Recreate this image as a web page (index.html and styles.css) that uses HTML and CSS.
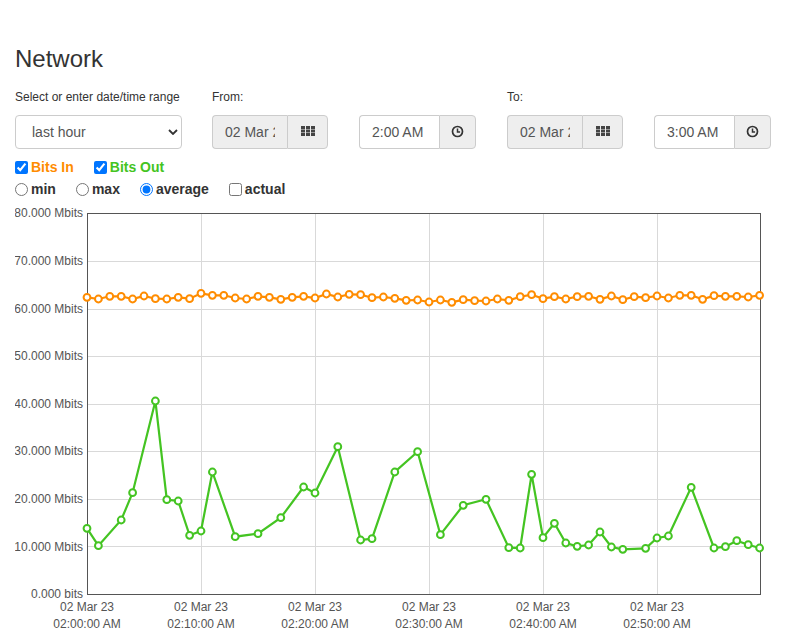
FILE: index.html
```html
<!DOCTYPE html>
<html>
<head>
<meta charset="utf-8">
<link rel="stylesheet" href="styles.css">
</head>
<body>
<div class="page">
  <h2 class="title">Network</h2>
  <div class="controls">
    <div class="col col-range">
      <label class="lbl">Select or enter date/time range</label>
      <div class="select-wrap">
        <select class="range-select"><option>last hour</option></select>
        <svg class="chev" width="10" height="6" viewBox="0 0 10 6"><path d="M1 1 L5 5 L9 1" fill="none" stroke="#333" stroke-width="1.8"/></svg>
      </div>
    </div>
    <div class="col">
      <label class="lbl">From:</label>
      <div class="pair">
        <div class="group">
          <input class="field field-date" type="text" value="02 Mar 23" readonly>
          <span class="addon addon-date">
            <svg width="14" height="10" viewBox="0 0 14 10"><g fill="#444"><rect x="0" y="0" width="4" height="3"/><rect x="5" y="0" width="4" height="3"/><rect x="10" y="0" width="4" height="3"/><rect x="0" y="3.5" width="4" height="3"/><rect x="5" y="3.5" width="4" height="3"/><rect x="10" y="3.5" width="4" height="3"/><rect x="0" y="7" width="4" height="3"/><rect x="5" y="7" width="4" height="3"/><rect x="10" y="7" width="4" height="3"/></g></svg>
          </span>
        </div>
        <div class="group">
          <input class="field field-time" type="text" value="2:00 AM">
          <span class="addon addon-time">
            <svg width="13" height="13" viewBox="-6.5 -6.5 13 13"><circle r="5" fill="none" stroke="#333" stroke-width="1.7"/><path d="M0 -3 V0.6 H2.6" fill="none" stroke="#333" stroke-width="1.5"/></svg>
          </span>
        </div>
      </div>
    </div>
    <div class="col">
      <label class="lbl">To:</label>
      <div class="pair">
        <div class="group">
          <input class="field field-date" type="text" value="02 Mar 23" readonly>
          <span class="addon addon-date">
            <svg width="14" height="10" viewBox="0 0 14 10"><g fill="#444"><rect x="0" y="0" width="4" height="3"/><rect x="5" y="0" width="4" height="3"/><rect x="10" y="0" width="4" height="3"/><rect x="0" y="3.5" width="4" height="3"/><rect x="5" y="3.5" width="4" height="3"/><rect x="10" y="3.5" width="4" height="3"/><rect x="0" y="7" width="4" height="3"/><rect x="5" y="7" width="4" height="3"/><rect x="10" y="7" width="4" height="3"/></g></svg>
          </span>
        </div>
        <div class="group">
          <input class="field field-time" type="text" value="3:00 AM">
          <span class="addon addon-time">
            <svg width="13" height="13" viewBox="-6.5 -6.5 13 13"><circle r="5" fill="none" stroke="#333" stroke-width="1.7"/><path d="M0 -3 V0.6 H2.6" fill="none" stroke="#333" stroke-width="1.5"/></svg>
          </span>
        </div>
      </div>
    </div>
  </div>

  <div class="opts">
    <label class="opt"><input type="checkbox" checked><span class="in">Bits In</span></label>
    <label class="opt"><input type="checkbox" checked><span class="out">Bits Out</span></label>
  </div>
  <div class="opts">
    <label class="opt"><input type="radio" name="agg"><span>min</span></label>
    <label class="opt"><input type="radio" name="agg"><span>max</span></label>
    <label class="opt"><input type="radio" name="agg" checked><span>average</span></label>
    <label class="opt"><input type="checkbox"><span>actual</span></label>
  </div>

  <svg class="chart" width="772" height="434" viewBox="15 200 772 434">
    <g class="grid" stroke="#d9d9d9" stroke-width="1">
      <line x1="201.5" y1="213" x2="201.5" y2="594"/>
      <line x1="315.5" y1="213" x2="315.5" y2="594"/>
      <line x1="429.5" y1="213" x2="429.5" y2="594"/>
      <line x1="543.5" y1="213" x2="543.5" y2="594"/>
      <line x1="657.5" y1="213" x2="657.5" y2="594"/>
      <line x1="87" y1="261.5" x2="760" y2="261.5"/>
      <line x1="87" y1="309.5" x2="760" y2="309.5"/>
      <line x1="87" y1="356.5" x2="760" y2="356.5"/>
      <line x1="87" y1="404.5" x2="760" y2="404.5"/>
      <line x1="87" y1="451.5" x2="760" y2="451.5"/>
      <line x1="87" y1="499.5" x2="760" y2="499.5"/>
      <line x1="87" y1="546.5" x2="760" y2="546.5"/>
    </g>
    <rect x="87.5" y="213.5" width="673" height="381" fill="none" stroke="#555" stroke-width="1"/>
    <g class="ylab" text-anchor="end">
      <text x="83" y="217.3">80.000 Mbits</text>
      <text x="83" y="265">70.000 Mbits</text>
      <text x="83" y="312.6">60.000 Mbits</text>
      <text x="83" y="360.2">50.000 Mbits</text>
      <text x="83" y="407.8">40.000 Mbits</text>
      <text x="83" y="455.4">30.000 Mbits</text>
      <text x="83" y="503">20.000 Mbits</text>
      <text x="83" y="550.7">10.000 Mbits</text>
      <text x="83" y="598.3">0.000 bits</text>
    </g>
    <g class="xlab" text-anchor="middle">
      <text x="87" y="611">02 Mar 23</text><text x="87" y="628">02:00:00 AM</text>
      <text x="201" y="611">02 Mar 23</text><text x="201" y="628">02:10:00 AM</text>
      <text x="315" y="611">02 Mar 23</text><text x="315" y="628">02:20:00 AM</text>
      <text x="429" y="611">02 Mar 23</text><text x="429" y="628">02:30:00 AM</text>
      <text x="543" y="611">02 Mar 23</text><text x="543" y="628">02:40:00 AM</text>
      <text x="657" y="611">02 Mar 23</text><text x="657" y="628">02:50:00 AM</text>
    </g>
    <polyline fill="none" stroke="#ff8c00" stroke-width="2.2" points="87,297.3 98.4,299 109.8,296.3 121.2,296.3 132.6,299 144,296 155.4,298.7 166.8,299 178.2,297.3 189.6,298.7 201,293.3 212.4,295.3 223.8,295.3 235.2,298 246.6,299 258,296.3 269.4,297.3 280.8,299.3 292.2,297.3 303.6,296.3 315,298 326.4,294 337.8,297 349.2,294.3 360.6,294.7 372,297.7 383.4,297 394.8,298.3 406.2,300.3 417.6,300 429,302 440.4,300 451.8,302.3 463.2,299.7 474.6,300.7 486,301 497.4,299 508.8,300.3 520.2,296.7 531.6,294.7 543,298.7 554.4,296.7 565.8,299 577.2,296.7 588.6,296.3 600,299.3 611.4,296 622.8,299.7 634.2,296.7 645.6,297.7 657,296 668.4,298 679.8,295.3 691.2,295.3 702.6,299.3 714,295.7 725.4,296.3 736.8,296.3 748.2,297 759.6,295.3"/>
    <g fill="#fff" stroke="#ff8c00" stroke-width="2">
      <circle cx="87" cy="297.3" r="3.4"/><circle cx="98.4" cy="299" r="3.4"/><circle cx="109.8" cy="296.3" r="3.4"/><circle cx="121.2" cy="296.3" r="3.4"/><circle cx="132.6" cy="299" r="3.4"/><circle cx="144" cy="296" r="3.4"/><circle cx="155.4" cy="298.7" r="3.4"/><circle cx="166.8" cy="299" r="3.4"/><circle cx="178.2" cy="297.3" r="3.4"/><circle cx="189.6" cy="298.7" r="3.4"/>
      <circle cx="201" cy="293.3" r="3.4"/><circle cx="212.4" cy="295.3" r="3.4"/><circle cx="223.8" cy="295.3" r="3.4"/><circle cx="235.2" cy="298" r="3.4"/><circle cx="246.6" cy="299" r="3.4"/><circle cx="258" cy="296.3" r="3.4"/><circle cx="269.4" cy="297.3" r="3.4"/><circle cx="280.8" cy="299.3" r="3.4"/><circle cx="292.2" cy="297.3" r="3.4"/><circle cx="303.6" cy="296.3" r="3.4"/>
      <circle cx="315" cy="298" r="3.4"/><circle cx="326.4" cy="294" r="3.4"/><circle cx="337.8" cy="297" r="3.4"/><circle cx="349.2" cy="294.3" r="3.4"/><circle cx="360.6" cy="294.7" r="3.4"/><circle cx="372" cy="297.7" r="3.4"/><circle cx="383.4" cy="297" r="3.4"/><circle cx="394.8" cy="298.3" r="3.4"/><circle cx="406.2" cy="300.3" r="3.4"/><circle cx="417.6" cy="300" r="3.4"/>
      <circle cx="429" cy="302" r="3.4"/><circle cx="440.4" cy="300" r="3.4"/><circle cx="451.8" cy="302.3" r="3.4"/><circle cx="463.2" cy="299.7" r="3.4"/><circle cx="474.6" cy="300.7" r="3.4"/><circle cx="486" cy="301" r="3.4"/><circle cx="497.4" cy="299" r="3.4"/><circle cx="508.8" cy="300.3" r="3.4"/><circle cx="520.2" cy="296.7" r="3.4"/><circle cx="531.6" cy="294.7" r="3.4"/>
      <circle cx="543" cy="298.7" r="3.4"/><circle cx="554.4" cy="296.7" r="3.4"/><circle cx="565.8" cy="299" r="3.4"/><circle cx="577.2" cy="296.7" r="3.4"/><circle cx="588.6" cy="296.3" r="3.4"/><circle cx="600" cy="299.3" r="3.4"/><circle cx="611.4" cy="296" r="3.4"/><circle cx="622.8" cy="299.7" r="3.4"/><circle cx="634.2" cy="296.7" r="3.4"/><circle cx="645.6" cy="297.7" r="3.4"/>
      <circle cx="657" cy="296" r="3.4"/><circle cx="668.4" cy="298" r="3.4"/><circle cx="679.8" cy="295.3" r="3.4"/><circle cx="691.2" cy="295.3" r="3.4"/><circle cx="702.6" cy="299.3" r="3.4"/><circle cx="714" cy="295.7" r="3.4"/><circle cx="725.4" cy="296.3" r="3.4"/><circle cx="736.8" cy="296.3" r="3.4"/><circle cx="748.2" cy="297" r="3.4"/><circle cx="759.6" cy="295.3" r="3.4"/>
    </g>
    <polyline fill="none" stroke="#44c422" stroke-width="2.2" points="87,528.3 98.4,545.7 121.2,520 132.6,492.7 155.4,401 166.8,499.7 178.2,501 189.6,535.3 201,531 212.4,472 235.2,536.7 258,533.7 280.8,517.7 303.6,487 315,493 337.8,446.7 360.6,540 372,538.7 394.8,472 417.6,451.7 440.4,534.7 463.2,505.3 486,499.3 508.8,547.7 520.2,548 531.6,474.3 543,537.7 554.4,523.3 565.8,543 577.2,546.3 588.6,545 600,532 611.4,547 622.8,549.3 645.6,548.3 657,538 668.4,536 691.2,487.3 714,548 725.4,546.7 736.8,540.7 748.2,544.7 759.6,548"/>
    <g fill="#fff" stroke="#44c422" stroke-width="2">
      <circle cx="87" cy="528.3" r="3.4"/><circle cx="98.4" cy="545.7" r="3.4"/><circle cx="121.2" cy="520" r="3.4"/><circle cx="132.6" cy="492.7" r="3.4"/><circle cx="155.4" cy="401" r="3.4"/><circle cx="166.8" cy="499.7" r="3.4"/><circle cx="178.2" cy="501" r="3.4"/><circle cx="189.6" cy="535.3" r="3.4"/><circle cx="201" cy="531" r="3.4"/><circle cx="212.4" cy="472" r="3.4"/>
      <circle cx="235.2" cy="536.7" r="3.4"/><circle cx="258" cy="533.7" r="3.4"/><circle cx="280.8" cy="517.7" r="3.4"/><circle cx="303.6" cy="487" r="3.4"/><circle cx="315" cy="493" r="3.4"/><circle cx="337.8" cy="446.7" r="3.4"/><circle cx="360.6" cy="540" r="3.4"/><circle cx="372" cy="538.7" r="3.4"/><circle cx="394.8" cy="472" r="3.4"/><circle cx="417.6" cy="451.7" r="3.4"/>
      <circle cx="440.4" cy="534.7" r="3.4"/><circle cx="463.2" cy="505.3" r="3.4"/><circle cx="486" cy="499.3" r="3.4"/><circle cx="508.8" cy="547.7" r="3.4"/><circle cx="520.2" cy="548" r="3.4"/><circle cx="531.6" cy="474.3" r="3.4"/><circle cx="543" cy="537.7" r="3.4"/><circle cx="554.4" cy="523.3" r="3.4"/><circle cx="565.8" cy="543" r="3.4"/><circle cx="577.2" cy="546.3" r="3.4"/>
      <circle cx="588.6" cy="545" r="3.4"/><circle cx="600" cy="532" r="3.4"/><circle cx="611.4" cy="547" r="3.4"/><circle cx="622.8" cy="549.3" r="3.4"/><circle cx="645.6" cy="548.3" r="3.4"/><circle cx="657" cy="538" r="3.4"/><circle cx="668.4" cy="536" r="3.4"/><circle cx="691.2" cy="487.3" r="3.4"/><circle cx="714" cy="548" r="3.4"/><circle cx="725.4" cy="546.7" r="3.4"/>
      <circle cx="736.8" cy="540.7" r="3.4"/><circle cx="748.2" cy="544.7" r="3.4"/><circle cx="759.6" cy="548" r="3.4"/>
    </g>
  </svg>
</div>
</body>
</html>
```

FILE: styles.css
```css
html, body {
  margin: 0;
  padding: 0;
  background: #fff;
}
body {
  font-family: "Liberation Sans", Arial, sans-serif;
  color: #333;
}
.page {
  padding: 0 0 0 15px;
}
.title {
  margin: 46px 0 17px 0;
  font-size: 24px;
  line-height: 26px;
  font-weight: normal;
  color: #333;
}
.controls {
  display: flex;
  align-items: flex-start;
}
.col {
  display: flex;
  flex-direction: column;
}
.col-range {
  margin-right: 30px;
}
.col:last-child {
  margin-left: 31px;
}
.lbl {
  display: block;
  font-size: 12px;
  line-height: 17px;
  height: 17px;
  margin-bottom: 9px;
  color: #333;
}
.select-wrap {
  position: relative;
  width: 167px;
  height: 34px;
}
.range-select {
  appearance: none;
  -webkit-appearance: none;
  box-sizing: border-box;
  width: 167px;
  height: 34px;
  margin: 0;
  padding: 0 24px 0 16px;
  border: 1px solid #ccc;
  border-radius: 4px;
  background: #fff;
  font-family: "Liberation Sans", Arial, sans-serif;
  font-size: 14px;
  color: #555;
}
.chev {
  position: absolute;
  right: 4px;
  top: 14px;
  pointer-events: none;
}
.pair {
  display: flex;
  gap: 31px;
}
.group {
  display: flex;
  height: 34px;
}
.field {
  box-sizing: border-box;
  height: 34px;
  margin: 0;
  padding: 0 12px;
  border: 1px solid #ccc;
  border-right: none;
  border-radius: 4px 0 0 4px;
  font-family: "Liberation Sans", Arial, sans-serif;
  font-size: 14px;
  color: #555;
  background: #fff;
  outline: none;
}
.field-date {
  width: 75px;
  background: #eee;
}
.field-time {
  width: 80px;
}
.addon {
  box-sizing: border-box;
  height: 34px;
  display: flex;
  align-items: center;
  justify-content: center;
  border: 1px solid #ccc;
  border-radius: 0 4px 4px 0;
  background: #eee;
}
.addon-date {
  width: 41px;
}
.addon-date svg {
  margin-top: -2px;
}
.addon-time {
  width: 37px;
}
.addon-time svg {
  margin-top: -1px;
}
.opts {
  display: flex;
  align-items: center;
  height: 22px;
}
.controls + .opts {
  margin-top: 7px;
}
.opt {
  display: flex;
  align-items: center;
  margin-right: 20px;
  font-size: 14px;
  font-weight: bold;
  color: #333;
}
.opt input {
  margin: 0 3px 0 0;
  width: 13px;
  height: 13px;
}
.opt .in {
  color: #ff8c00;
}
.opt .out {
  color: #44c422;
}
.chart {
  display: block;
}
.ylab text, .xlab text {
  font-family: "Liberation Sans", Arial, sans-serif;
  font-size: 12px;
  fill: #545454;
}
```
